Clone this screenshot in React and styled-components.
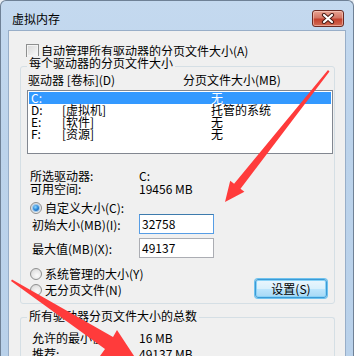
import React from "react";
import styled, { createGlobalStyle } from "styled-components";

const GlobalStyle = createGlobalStyle`
  html, body { margin: 0; padding: 0; background: #e9eef4; }
  body {
    font-family: "Noto Sans CJK SC", "Liberation Sans", sans-serif;
    font-size: 12px;
    color: #000;
  }
  * { box-sizing: border-box; }
`;

const Window = styled.div`
  position: relative;
  width: 354px;
  height: 356px;
  overflow: hidden;
  display: flex;
  flex-direction: column;
  background: linear-gradient(180deg, #c4d9ef 0%, #bcd3eb 40%, #b9d1ea 100%);
  border-left: 1px solid #6f8196;
  border-top: 1px solid #6f8196;
  border-right: 1px solid #6f8196;
  border-radius: 6px 6px 0 0;
`;

const TitleBar = styled.div`
  height: 29px;
  flex: none;
  display: flex;
  align-items: flex-start;
  justify-content: space-between;
  padding: 9px 9px 0 11px;
`;

const Title = styled.div`
  font-size: 12px;
  line-height: 18px;
  letter-spacing: 0;
`;

const CloseButton = styled.div`
  width: 32px;
  height: 17px;
  border: 1px solid #6b2a22;
  border-radius: 3px;
  background: linear-gradient(180deg, #e8a493 0%, #d47665 45%, #c4412d 55%, #d16c55 100%);
  display: flex;
  align-items: center;
  justify-content: center;
  box-shadow: inset 0 0 0 1px rgba(255, 220, 210, 0.5);
`;

const Client = styled.div`
  flex: 1;
  margin: 0 7px 0 7px;
  border: 1px solid #98aec8;
  border-bottom: none;
  background: #f0f0f0;
  display: flex;
  flex-direction: column;
  overflow: hidden;
`;

const CheckRow = styled.div`
  display: flex;
  align-items: center;
  height: 13px;
  margin: 13px 0 0 17px;
  gap: 2px;
  line-height: 13px;
`;

const CheckBox = styled.span`
  width: 13px;
  height: 13px;
  flex: none;
  border: 1px solid #8e8f8f;
  background: linear-gradient(135deg, #d7d7d7 0%, #ececec 60%, #fafafa 100%);
  box-shadow: inset 0 0 0 1px #f4f4f4;
`;

const Group = styled.div`
  margin: ${(p) => p.$mt}px 10px 0 11px;
  border: 1px solid #d5dfe5;
  border-radius: 3px;
  display: flex;
  flex-direction: column;
  padding-bottom: ${(p) => p.$pb}px;
  flex: ${(p) => (p.$grow ? 1 : "none")};
  ${(p) => (p.$grow ? "border-bottom: none; margin-bottom: -10px;" : "")}
`;

const GroupTitle = styled.div`
  align-self: flex-start;
  margin: ${(p) => p.$mt}px 0 0 6px;
  padding: 0 2px;
  line-height: 14px;
  background: #f0f0f0;
`;

const HeaderRow = styled.div`
  display: grid;
  grid-template-columns: 155px 1fr;
  margin: 3px 0 0 7px;
  line-height: 14px;
`;

const ListBox = styled.div`
  margin: 3px 0 0 6px;
  width: 306px;
  height: 64px;
  border: 1px solid #828790;
  background: #fff;
  padding: 1px;
  display: flex;
  flex-direction: column;
`;

const ListRow = styled.div`
  display: grid;
  grid-template-columns: 31px 149px 1fr;
  height: 12px;
  line-height: 12px;
  padding-left: 2px;
  background: ${(p) => (p.$selected ? "#3399ff" : "transparent")};
  color: ${(p) => (p.$selected ? "#fff" : "#000")};
`;

const InfoRows = styled.div`
  display: flex;
  flex-direction: column;
  margin: ${(p) => p.$mt}px 0 0 ${(p) => p.$ml}px;
`;

const InfoRow = styled.div`
  display: grid;
  grid-template-columns: ${(p) => p.$col}px 1fr;
  line-height: ${(p) => p.$lh}px;
  height: ${(p) => p.$lh}px;
`;

const RadioRow = styled.div`
  display: flex;
  align-items: center;
  gap: 3px;
  height: 12px;
  line-height: 12px;
  margin: ${(p) => p.$mt}px 0 0 0;
`;

const Radio = styled.span`
  position: relative;
  width: 12px;
  height: 12px;
  flex: none;
  border-radius: 50%;
  border: 1px solid #8e8f8f;
  background: radial-gradient(circle at 60% 65%, #fbfbfb 0%, #e6e6e6 55%, #cfcfcf 100%);
  display: flex;
  align-items: center;
  justify-content: center;
`;

const RadioDot = styled.span`
  width: 6px;
  height: 6px;
  border-radius: 50%;
  background: radial-gradient(circle at 40% 35%, #8fd9ff 0%, #2a86d8 50%, #14539b 100%);
  box-shadow: 0 0 0 1px #9ec7ea;
`;

const RadioBlock = styled.div`
  display: flex;
  flex-direction: column;
  margin-left: 9px;
`;

const InputRow = styled.div`
  display: grid;
  grid-template-columns: 107px 75px;
  align-items: center;
  height: 20px;
  margin: ${(p) => p.$mt}px 0 0 11px;
`;

const Input = styled.div`
  height: 20px;
  border: 1px solid ${(p) => (p.$focused ? "#569de5" : "#abadb3")};
  border-top-color: ${(p) => (p.$focused ? "#3d7bad" : "#abadb3")};
  background: #fff;
  padding-left: 2px;
  line-height: 18px;
`;

const BottomRow = styled.div`
  display: flex;
  justify-content: space-between;
  align-items: flex-end;
  margin: 10px 7px 0 9px;
`;

const RadioStack = styled.div`
  display: flex;
  flex-direction: column;
  padding-bottom: 2px;
`;

const Button = styled.div`
  width: 72px;
  height: 19px;
  border: 1px solid #3c9ad6;
  border-radius: 3px;
  background: linear-gradient(180deg, #eaf6fd 0%, #d9f0fc 50%, #bee6fd 51%, #a7d9f5 100%);
  box-shadow: inset 0 0 0 1px #8ad3f7, 0 0 0 1px #6fc3ee;
  display: flex;
  align-items: center;
  justify-content: center;
  line-height: 17px;
`;

const Overlay = styled.svg`
  position: absolute;
  left: -1px;
  top: -1px;
  pointer-events: none;
`;

function CloseGlyph() {
  return (
    <svg width="14" height="11" viewBox="0 0 14 11">
      <path d="M3 2 L11 9 M11 2 L3 9" stroke="#4a1d16" strokeWidth="4.2" strokeLinecap="round" />
      <path d="M3 2 L11 9 M11 2 L3 9" stroke="#ffffff" strokeWidth="2.2" strokeLinecap="round" />
    </svg>
  );
}

const drives = [
  { d: "C:", label: "", size: "无", selected: true },
  { d: "D:", label: "[虚拟机]", size: "托管的系统" },
  { d: "E:", label: "[软件]", size: "无" },
  { d: "F:", label: "[资源]", size: "无" },
];

export default function App() {
  return (
    <>
      <GlobalStyle />
      <Window>
        <TitleBar>
          <Title>虚拟内存</Title>
          <CloseButton>
            <CloseGlyph />
          </CloseButton>
        </TitleBar>
        <Client>
          <CheckRow>
            <CheckBox />
            <span>自动管理所有驱动器的分页文件大小(A)</span>
          </CheckRow>

          <Group $mt={9} $pb={5}>
            <GroupTitle $mt={-11}>每个驱动器的分页文件大小</GroupTitle>
            <HeaderRow>
              <span>驱动器 [卷标](D)</span>
              <span>分页文件大小(MB)</span>
            </HeaderRow>
            <ListBox>
              {drives.map((r) => (
                <ListRow key={r.d} $selected={r.selected}>
                  <span>{r.d}</span>
                  <span>{r.label}</span>
                  <span>{r.size}</span>
                </ListRow>
              ))}
            </ListBox>
            <InfoRows $mt={15} $ml={9}>
              <InfoRow $col={109} $lh={13}>
                <span>所选驱动器:</span>
                <span>C:</span>
              </InfoRow>
              <InfoRow $col={109} $lh={13}>
                <span>可用空间:</span>
                <span>19456 MB</span>
              </InfoRow>
            </InfoRows>
            <RadioBlock>
              <RadioRow $mt={7}>
                <Radio>
                  <RadioDot />
                </Radio>
                <span>自定义大小(C):</span>
              </RadioRow>
            </RadioBlock>
            <InputRow $mt={0}>
              <span>初始大小(MB)(I):</span>
              <Input $focused>32758</Input>
            </InputRow>
            <InputRow $mt={4}>
              <span>最大值(MB)(X):</span>
              <Input>49137</Input>
            </InputRow>
            <BottomRow>
              <RadioStack>
                <RadioRow $mt={0}>
                  <Radio />
                  <span>系统管理的大小(Y)</span>
                </RadioRow>
                <RadioRow $mt={4}>
                  <Radio />
                  <span>无分页文件(N)</span>
                </RadioRow>
              </RadioStack>
              <Button>设置(S)</Button>
            </BottomRow>
          </Group>

          <Group $mt={13} $pb={0} $grow>
            <GroupTitle $mt={-9}>所有驱动器分页文件大小的总数</GroupTitle>
            <InfoRows $mt={7} $ml={11}>
              <InfoRow $col={107} $lh={16}>
                <span>允许的最小值:</span>
                <span>16 MB</span>
              </InfoRow>
              <InfoRow $col={107} $lh={16}>
                <span>推荐:</span>
                <span>49137 MB</span>
              </InfoRow>
            </InfoRows>
          </Group>
        </Client>

        <Overlay width="354" height="356" viewBox="0 0 354 356">
          <polygon
            points="328,70 329.5,71.5 240.5,188.7 244.4,191.7 225,202 230.2,180.7 234.1,183.7"
            fill="#ff3b3b"
          />
          <polygon
            points="11,281 12,279.5 113,337 117,330 138,362 100,356 105,349"
            fill="#ff3b3b"
          />
        </Overlay>
      </Window>
    </>
  );
}
